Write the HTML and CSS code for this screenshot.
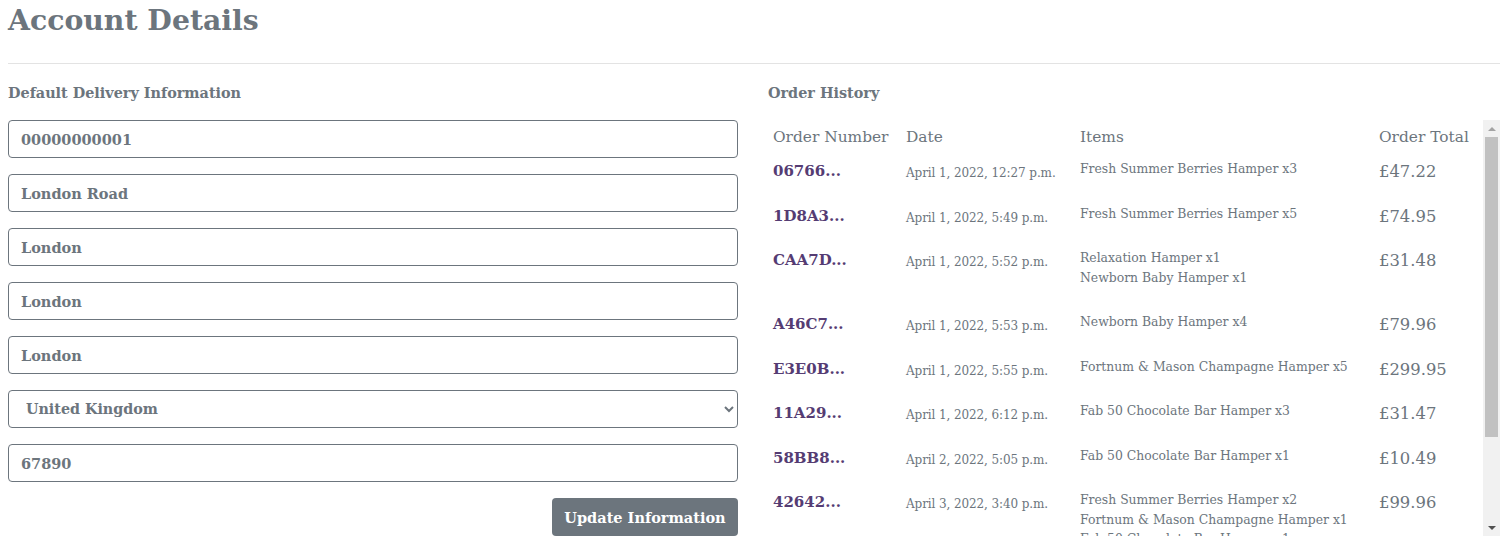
FILE: index.html
```html
<!DOCTYPE html>
<html lang="en">
<head>
<meta charset="utf-8">
<title>Account Details</title>
<link rel="stylesheet" href="styles.css">
</head>
<body>
<div class="page">
  <h1 class="title">Account Details</h1>
  <hr class="rule">
  <div class="cols">
    <section class="delivery">
      <h2 class="sub">Default Delivery Information</h2>
      <form class="form">
        <input class="field" type="text" value="00000000001">
        <input class="field" type="text" value="London Road">
        <input class="field" type="text" value="London">
        <input class="field" type="text" value="London">
        <input class="field" type="text" value="London">
        <select class="field select">
          <option>United Kingdom</option>
        </select>
        <input class="field" type="text" value="67890">
        <div class="actions"><button class="btn" type="button">Update Information</button></div>
      </form>
    </section>
    <section class="history">
      <h2 class="sub">Order History</h2>
      <div class="scrollbox">
        <div class="viewport">
          <table class="orders">
            <colgroup>
              <col class="c1"><col class="c2"><col class="c3"><col class="c4">
            </colgroup>
            <thead>
              <tr><th>Order Number</th><th>Date</th><th>Items</th><th>Order Total</th></tr>
            </thead>
            <tbody>
              <tr><td class="num">06766...</td><td class="date">April 1, 2022, 12:27 p.m.</td><td class="items"><p>Fresh Summer Berries Hamper x3</p></td><td class="total">£47.22</td></tr>
              <tr><td class="num">1D8A3...</td><td class="date">April 1, 2022, 5:49 p.m.</td><td class="items"><p>Fresh Summer Berries Hamper x5</p></td><td class="total">£74.95</td></tr>
              <tr><td class="num">CAA7D...</td><td class="date">April 1, 2022, 5:52 p.m.</td><td class="items"><p>Relaxation Hamper x1</p><p>Newborn Baby Hamper x1</p></td><td class="total">£31.48</td></tr>
              <tr><td class="num">A46C7...</td><td class="date">April 1, 2022, 5:53 p.m.</td><td class="items"><p>Newborn Baby Hamper x4</p></td><td class="total">£79.96</td></tr>
              <tr><td class="num">E3E0B...</td><td class="date">April 1, 2022, 5:55 p.m.</td><td class="items"><p>Fortnum &amp; Mason Champagne Hamper x5</p></td><td class="total">£299.95</td></tr>
              <tr><td class="num">11A29...</td><td class="date">April 1, 2022, 6:12 p.m.</td><td class="items"><p>Fab 50 Chocolate Bar Hamper x3</p></td><td class="total">£31.47</td></tr>
              <tr><td class="num">58BB8...</td><td class="date">April 2, 2022, 5:05 p.m.</td><td class="items"><p>Fab 50 Chocolate Bar Hamper x1</p></td><td class="total">£10.49</td></tr>
              <tr><td class="num">42642...</td><td class="date">April 3, 2022, 3:40 p.m.</td><td class="items"><p>Fresh Summer Berries Hamper x2</p><p>Fortnum &amp; Mason Champagne Hamper x1</p><p>Fab 50 Chocolate Bar Hamper x1</p></td><td class="total">£99.96</td></tr>
            </tbody>
          </table>
        </div>
        <div class="sbar" aria-hidden="true">
          <div class="sb-btn sb-up"></div>
          <div class="sb-thumb"></div>
          <div class="sb-track"></div>
          <div class="sb-btn sb-down"></div>
        </div>
      </div>
    </section>
  </div>
</div>
</body>
</html>
```
FILE: styles.css
```css
html, body {
  margin: 0;
  padding: 0;
  background: #fff;
}
body {
  font-family: "DejaVu Serif", "Liberation Serif", serif;
  color: #6c757d;
}
.page {
  padding: 0 8px;
}
.title {
  margin: 0;
  font-size: 28.3px;
  line-height: 40px;
  font-weight: 700;
  color: #6c757d;
}
.rule {
  margin: 23px 0 0;
  border: 0;
  border-top: 1px solid #e3e3e3;
}
.cols {
  display: grid;
  grid-template-columns: 730px 1fr;
  column-gap: 30px;
  margin-top: 17px;
}
.sub {
  margin: 0;
  font-size: 14.4px;
  line-height: 24px;
  font-weight: 700;
  color: #6c757d;
}
.form {
  display: flex;
  flex-direction: column;
  gap: 16px;
  margin-top: 15px;
}
.field {
  box-sizing: border-box;
  height: 38px;
  width: 100%;
  margin: 0;
  padding: 0 12px;
  border: 1px solid #6c757d;
  border-radius: 4px;
  font-family: inherit;
  font-size: 14.5px;
  font-weight: 700;
  color: #6c757d;
  background: #fff;
}
.select {
  padding-left: 13px;
  font-size: 14.3px;
}
.actions {
  display: flex;
  justify-content: flex-end;
}
.btn {
  height: 38px;
  width: 186px;
  padding: 0;
  border: 0;
  border-radius: 4px;
  background: #6c757d;
  color: #fff;
  font-family: inherit;
  font-size: 14.5px;
  font-weight: 700;
}
.scrollbox {
  margin-top: 15px;
  height: 416px;
  display: flex;
}
.viewport {
  flex: 1;
  min-width: 0;
  overflow: hidden;
}
.sbar {
  width: 17px;
  flex: none;
  display: flex;
  flex-direction: column;
  background: #f1f1f1;
}
.sb-btn {
  height: 17px;
  flex: none;
  display: flex;
  align-items: center;
  justify-content: center;
}
.sb-btn::before {
  content: "";
  width: 0;
  height: 0;
  border-left: 4px solid transparent;
  border-right: 4px solid transparent;
}
.sb-up::before {
  border-bottom: 4px solid #a3a3a3;
}
.sb-down::before {
  border-top: 4px solid #505050;
}
.sb-thumb {
  height: 300px;
  flex: none;
  margin: 0 2px;
  background: #c1c1c1;
}
.sb-track {
  flex: 1;
}
.orders {
  width: 100%;
  border-collapse: collapse;
  table-layout: fixed;
}
.c1 { width: 133px; }
.c2 { width: 174px; }
.c3 { width: 299px; }
.orders th {
  text-align: left;
  font-weight: 400;
  font-size: 15.4px;
  line-height: 25px;
  padding: 5px 5px 5px;
  color: #6c757d;
}
.orders td {
  vertical-align: top;
  padding: 4px 5px;
}
.num {
  font-size: 15px;
  line-height: 25px;
  font-weight: 700;
  color: #553c73;
}
.date {
  font-size: 12px;
  line-height: 25px;
  letter-spacing: -0.1px;
  padding-top: 6px !important;
  white-space: nowrap;
}
.items p {
  margin: 0;
  font-size: 12.4px;
  line-height: 19.5px;
}
.items p:last-child {
  margin-bottom: 17px;
}
.total {
  font-size: 16.4px;
  line-height: 25px;
}
```
